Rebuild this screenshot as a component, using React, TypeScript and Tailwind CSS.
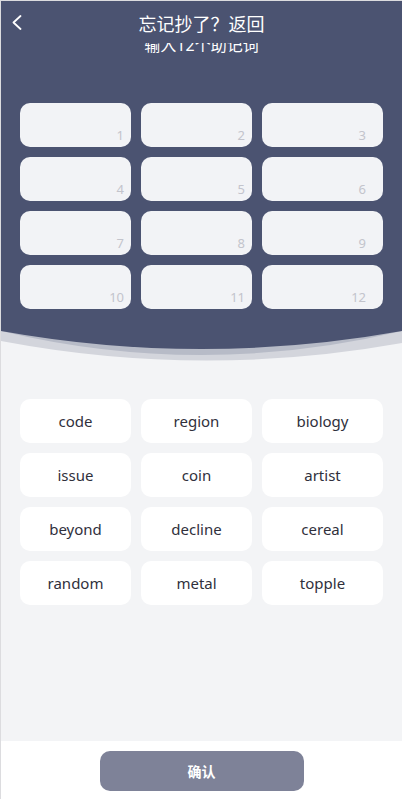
const words = [
  "code", "region", "biology",
  "issue", "coin", "artist",
  "beyond", "decline", "cereal",
  "random", "metal", "topple",
];

const slots = Array.from({ length: 12 }, (_, i) => i + 1);

export default function App() {
  return (
    <div
      className="flex h-[799px] w-[402px] flex-col overflow-hidden border-l border-t border-[#dcdcdf] bg-[#f3f4f6]"
      style={{ fontFamily: '"Noto Sans", "Noto Sans CJK SC", sans-serif' }}
    >
      {/* Header */}
      <div className="relative z-10 flex h-[42px] items-center justify-center bg-[#4b5371] pt-[3px]">
        <button className="absolute left-[11px] top-[14px] text-white">
          <svg width="10" height="15" viewBox="0 0 10 15" fill="none">
            <polyline points="8.5,1 1.5,7.5 8.5,14" stroke="white" strokeWidth="1.8" strokeLinecap="round" strokeLinejoin="round" />
          </svg>
        </button>
        <h1 className="text-[18px] leading-[24px] text-white">忘记抄了？返回</h1>
      </div>

      {/* Dark panel with slots */}
      <div className="relative bg-[#4b5371] pb-[22px] pl-[19px]">
        <p className="-mt-[8px] pr-[19px] text-center text-[16px] leading-[20px] text-white">输入12个助记词</p>
        <div className="mt-[48px] grid grid-cols-[111px_111px_121px] gap-[10px]">
          {slots.map((n) => (
            <div
              key={n}
              className={`flex h-[44px] items-end justify-end rounded-[10px] bg-[#f2f3f6] pb-[4px] ${n % 3 === 0 ? "pr-[17px]" : "pr-[7px]"}`}
            >
              <span className="text-[13px] leading-[16px] text-[#c3c4cc]">{n}</span>
            </div>
          ))}
        </div>
      </div>

      {/* Curve */}
      <svg width="401" height="34" viewBox="0 0 401 34" className="block shrink-0" preserveAspectRatio="none">
        <path d="M0 0 H401 V12 Q200.5 48 0 10 Z" fill="#d3d5dc" />
        <path d="M0 0 H401 V0 Q200.5 48 0 0 Z" fill="#b7bbc7" />
        <path d="M0 0 H401 V0 Q200.5 36 0 0 Z" fill="#4b5371" />
      </svg>

      {/* Words */}
      <div className="mt-[34px] grid grid-cols-[111px_111px_121px] gap-[10px] pl-[19px]">
        {words.map((w) => (
          <button
            key={w}
            className="flex h-[44px] items-center justify-center rounded-[10px] bg-white text-[15px] text-[#30303c]"
          >
            {w}
          </button>
        ))}
      </div>

      <div className="flex-1" />

      {/* Bottom */}
      <div className="flex h-[58px] shrink-0 justify-center bg-white pt-[10px]">
        <button className="h-[40px] w-[204px] rounded-[10px] bg-[#7e8298] text-[14px] font-bold text-white">
          确认
        </button>
      </div>
    </div>
  );
}
